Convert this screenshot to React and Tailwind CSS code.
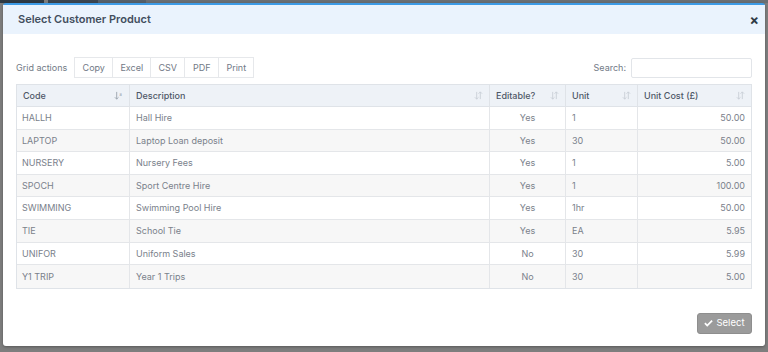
import React from "react";

const rows = [
  ["HALLH", "Hall Hire", "Yes", "1", "50.00"],
  ["LAPTOP", "Laptop Loan deposit", "Yes", "30", "50.00"],
  ["NURSERY", "Nursery Fees", "Yes", "1", "5.00"],
  ["SPOCH", "Sport Centre Hire", "Yes", "1", "100.00"],
  ["SWIMMING", "Swimming Pool Hire", "Yes", "1hr", "50.00"],
  ["TIE", "School Tie", "Yes", "EA", "5.95"],
  ["UNIFOR", "Uniform Sales", "No", "30", "5.99"],
  ["Y1 TRIP", "Year 1 Trips", "No", "30", "5.00"],
];

function SortIcon({ active }) {
  return (
    <svg width="9" height="9" viewBox="0 0 10 10" className="shrink-0">
      <path d="M3 1v8M1 7l2 2 2-2" stroke={active ? "#9aa3ad" : "#c8ced6"} strokeWidth="1" fill="none" />
      {active ? (
        <text x="6" y="5" fontSize="4.5" fill="#9aa3ad" fontFamily="Inter">a</text>
      ) : (
        <path d="M7 9V1M5 3l2-2 2 2" stroke="#c8ced6" strokeWidth="1" fill="none" />
      )}
    </svg>
  );
}

function Th({ children, w, active, last }) {
  return (
    <div
      className={`${w} flex items-center justify-between px-[6px] h-full ${last ? "" : "border-r border-[#dfe3e8]"}`}
    >
      <span>{children}</span>
      <SortIcon active={active} />
    </div>
  );
}

export default function App() {
  const font = { fontFamily: "Inter, 'Noto Sans', sans-serif" };
  return (
    <div className="w-[768px] h-[352px] bg-[#7e7e7e] flex flex-col overflow-hidden" style={font}>
      <div className="h-[3px] flex shrink-0">
        <div className="w-[44px] bg-[#2e3a44]" />
        <div className="w-[4px] bg-[#7e7e7e]" />
        <div className="w-[50px] bg-[#3a4550]" />
        <div className="w-[48px] bg-[#55606a]" />
        <div className="flex-1 bg-[#6a6f74]" />
      </div>
      <div className="ml-[3px] w-[762px] h-[343px] bg-white rounded-[3px] border-t-[2px] border-[#3d9be6] flex flex-col shadow-[0_1px_3px_rgba(0,0,0,0.3)]">
        <div className="h-[29px] bg-[#eaf3fd] flex items-center justify-between pl-[15px] pr-[6px] shrink-0">
          <span className="text-[11px] font-semibold text-[#424e5e]">Select Customer Product</span>
          <span className="text-[14px] font-bold text-[#2f3a46] leading-none">×</span>
        </div>
        <div className="px-[13px] pt-[23px] flex flex-col">
          <div className="flex items-center justify-between h-[21px]">
            <div className="flex items-center">
              <span className="text-[9px] text-[#727a86] mr-[7px]">Grid actions</span>
              <div className="flex h-[21px] border border-[#e6e8eb] text-[9px] text-[#727a86]">
                <div className="w-[38px] flex items-center justify-center border-r border-[#e6e8eb]">Copy</div>
                <div className="w-[38px] flex items-center justify-center border-r border-[#e6e8eb]">Excel</div>
                <div className="w-[34px] flex items-center justify-center border-r border-[#e6e8eb]">CSV</div>
                <div className="w-[34px] flex items-center justify-center border-r border-[#e6e8eb]">PDF</div>
                <div className="w-[34px] flex items-center justify-center">Print</div>
              </div>
            </div>
            <div className="flex items-center">
              <span className="text-[9px] text-[#727a86] mr-[5px]">Search:</span>
              <div className="w-[121px] h-[20px] border border-[#e2e5e9] rounded-[2px]" />
            </div>
          </div>
          <div className="mt-[6px] border border-[#dfe3e8] text-[9px]">
            <div className="flex h-[22px] bg-[#eef2f7] text-[#4e5867] font-medium border-b border-[#dfe3e8]">
              <Th w="w-[113px]" active>Code</Th>
              <Th w="w-[360px]">Description</Th>
              <Th w="w-[76px]">Editable?</Th>
              <Th w="w-[72px]">Unit</Th>
              <Th w="flex-1" last>Unit Cost (£)</Th>
            </div>
            {rows.map((r, i) => (
              <div
                key={r[0]}
                className={`flex h-[22.6px] text-[#7a818b] ${i % 2 ? "bg-[#f7f7f7]" : "bg-white"} ${i < rows.length - 1 ? "border-b border-[#e4e6e9]" : ""}`}
              >
                <div className="w-[113px] px-[5px] flex items-center border-r border-[#e4e6e9]">{r[0]}</div>
                <div className="w-[360px] px-[6px] flex items-center border-r border-[#e4e6e9]">{r[1]}</div>
                <div className="w-[76px] flex items-center justify-center border-r border-[#e4e6e9]">{r[2]}</div>
                <div className="w-[72px] px-[6px] flex items-center border-r border-[#e4e6e9]">{r[3]}</div>
                <div className="flex-1 px-[6px] flex items-center justify-end">{r[4]}</div>
              </div>
            ))}
          </div>
          <div className="flex justify-end mt-[24px]">
            <div className="w-[55px] h-[21px] bg-[#9b9b9b] border border-[#8e8e8e] rounded-[3px] flex items-center justify-center gap-[3px] text-white text-[9.5px]">
              <svg width="9" height="8" viewBox="0 0 10 8">
                <path d="M1 4.2l2.6 2.6L9 1.4" stroke="white" strokeWidth="2" fill="none" />
              </svg>
              <span>Select</span>
            </div>
          </div>
        </div>
      </div>
    </div>
  );
}
